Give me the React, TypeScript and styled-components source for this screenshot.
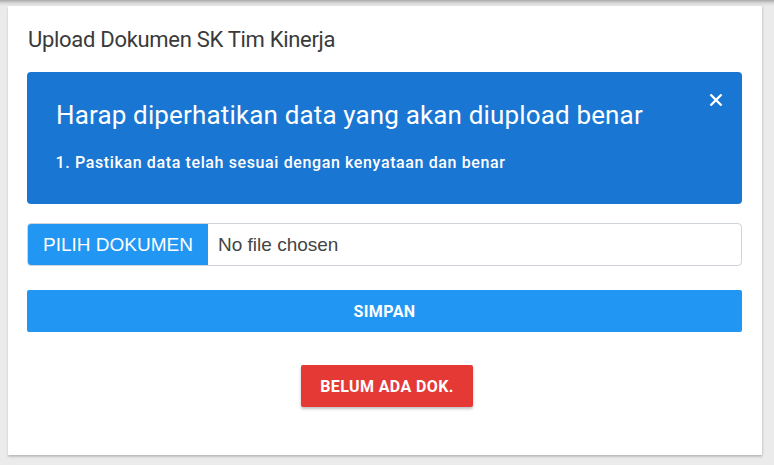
import React from 'react';
import styled, { createGlobalStyle } from 'styled-components';

const GlobalStyle = createGlobalStyle`
  html, body {
    margin: 0;
    padding: 0;
  }
  body {
    background: linear-gradient(to bottom, #a9a9a9 0px, #d6d6d6 3px, #ebebeb 6px) no-repeat, #ebebeb;
    font-family: Roboto, 'Liberation Sans', sans-serif;
  }
`;

const Page = styled.div`
  padding: 6px 12px 10px 8px;
`;

const Card = styled.div`
  background: #fff;
  box-shadow: 0 2px 2px rgba(0, 0, 0, 0.18), 1px 0 2px rgba(0, 0, 0, 0.08);
  padding: 21px 20px 48px 19px;
  display: flex;
  flex-direction: column;
`;

const Title = styled.h4`
  margin: 0 0 19px 1px;
  font-size: 22px;
  line-height: 26px;
  font-weight: 400;
  letter-spacing: -0.3px;
  color: #3a3a3a;
`;

const Alert = styled.div`
  position: relative;
  background: #1976d2;
  color: #fff;
  border-radius: 4px;
  padding: 28px 29px 31px;
`;

const AlertHeading = styled.h3`
  margin: 0;
  font-size: 26px;
  line-height: 31px;
  font-weight: 400;
  letter-spacing: 0.15px;
`;

const AlertList = styled.ol`
  margin: 22px 0 0;
  padding-left: 19px;
  font-size: 16px;
  line-height: 20px;
  font-weight: 500;
  letter-spacing: 0.62px;
`;

const CloseButton = styled.button`
  position: absolute;
  top: 16px;
  right: 14px;
  width: 24px;
  height: 24px;
  padding: 0;
  border: none;
  background: transparent;
  display: flex;
  align-items: center;
  justify-content: center;
  cursor: pointer;
`;

const FileRow = styled.label`
  margin-top: 19px;
  display: flex;
  align-items: stretch;
  height: 43px;
  box-sizing: border-box;
  border: 1px solid #ced4da;
  border-radius: 4px;
  overflow: hidden;
  font-family: 'Liberation Sans', Arial, sans-serif;
  font-size: 19px;
  cursor: pointer;
`;

const FileButton = styled.span`
  background: #2196f3;
  color: #fff;
  width: 180px;
  display: flex;
  align-items: center;
  justify-content: center;
`;

const FileName = styled.span`
  display: flex;
  align-items: center;
  padding-left: 10px;
  color: #444;
`;

const Button = styled.button<{ $color: string; $raised?: boolean }>`
  border: none;
  border-radius: 2px;
  background: ${(p) => p.$color};
  color: #fff;
  font-family: Roboto, 'Liberation Sans', sans-serif;
  font-weight: 700;
  font-size: 16px;
  letter-spacing: 0.4px;
  height: 42px;
  text-transform: uppercase;
  cursor: pointer;
  box-shadow: ${(p) => (p.$raised ? '0 2px 3px rgba(0, 0, 0, 0.25)' : 'none')};
`;

const SaveButton = styled(Button)`
  margin-top: 24px;
  height: 42px;
  width: 100%;
`;

const Center = styled.div`
  margin-top: 33px;
  display: flex;
  justify-content: center;
  padding-left: 5px;
`;

const MissingButton = styled(Button)`
  width: 172px;
`;

const App: React.FC = () => (
  <Page>
    <GlobalStyle />
    <Card>
      <Title>Upload Dokumen SK Tim Kinerja</Title>
      <Alert>
        <AlertHeading>Harap diperhatikan data yang akan diupload benar</AlertHeading>
        <AlertList>
          <li>Pastikan data telah sesuai dengan kenyataan dan benar</li>
        </AlertList>
        <CloseButton aria-label="close">
          <svg width="14" height="14" viewBox="0 0 14 14">
            <path d="M1.5 1.5l11 11M12.5 1.5l-11 11" stroke="#fff" strokeWidth="2.4" />
          </svg>
        </CloseButton>
      </Alert>
      <FileRow>
        <FileButton>PILIH DOKUMEN</FileButton>
        <FileName>No file chosen</FileName>
      </FileRow>
      <SaveButton $color="#2196f3">Simpan</SaveButton>
      <Center>
        <MissingButton $color="#e53935" $raised>
          Belum ada dok.
        </MissingButton>
      </Center>
    </Card>
  </Page>
);

export default App;
